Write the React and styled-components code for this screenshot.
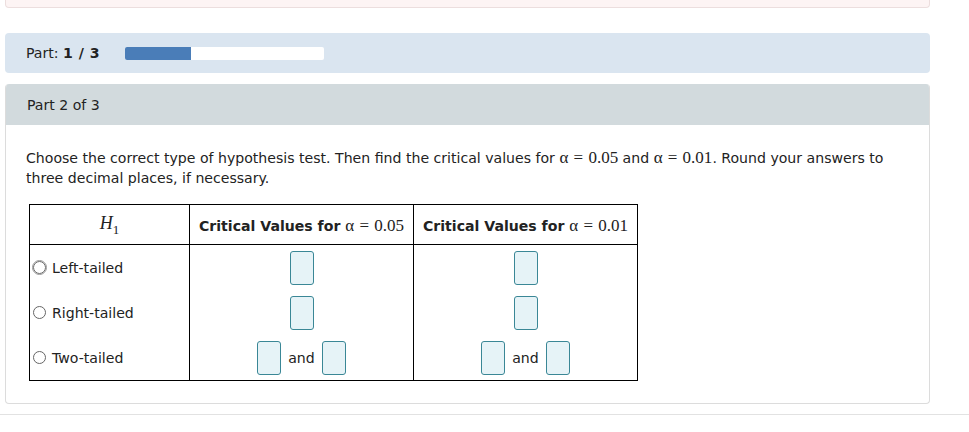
import React from 'react';
import styled, { createGlobalStyle } from 'styled-components';

const GlobalStyle = createGlobalStyle`
  html, body {
    margin: 0;
    padding: 0;
    background: #ffffff;
  }
  body {
    font-family: 'DejaVu Sans', Verdana, sans-serif;
    font-size: 14.1px;
    color: #222222;
  }
`;

const Page = styled.div`
  width: 969px;
  height: 432px;
  overflow: hidden;
  display: flex;
  flex-direction: column;
`;

const Content = styled.div`
  width: 925px;
  margin-left: 5px;
  display: flex;
  flex-direction: column;
`;

const AlertBox = styled.div`
  height: 7px;
  background: #fdf4f4;
  border: 1px solid #ecdede;
  border-top: none;
  border-radius: 0 0 4px 4px;
`;

const PartBar = styled.div`
  margin-top: 25px;
  height: 40px;
  background: #dae5f0;
  border-radius: 4px;
  display: flex;
  align-items: center;
  padding-left: 21px;
  gap: 25px;
`;

const PartLabel = styled.div`
  color: #222;
  b {
    font-weight: bold;
    word-spacing: 1px;
  }
`;

const Progress = styled.div`
  width: 199px;
  height: 13px;
  background: #ffffff;
  border-radius: 2px;
  overflow: hidden;
`;

const ProgressFill = styled.div`
  height: 100%;
  background: #4a7db8;
`;

const Section = styled.div`
  margin-top: 11px;
  border-radius: 4px;
  border: 1px solid #dcdcdc;
  border-top: none;
  overflow: hidden;
`;

const SectionHeader = styled.div`
  height: 41px;
  background: #d2dadd;
  display: flex;
  align-items: center;
  padding-left: 21px;
`;

const SectionBody = styled.div`
  padding: 23px 20px 23px 20px;
  height: 232px;
`;

const Prompt = styled.p`
  margin: 0;
  line-height: 20px;
  color: #222;
`;

const M = styled.span`
  font-family: 'Liberation Serif', 'Times New Roman', serif;
  font-size: 17px;
  font-weight: normal;
  white-space: nowrap;
  word-spacing: 1px;
`;

const Table = styled.table`
  margin-top: 16px;
  margin-left: 3px;
  border-collapse: collapse;
  td, th {
    border: 1px solid #000;
    padding: 0;
  }
`;

const HeadCell = styled.th`
  width: ${p => p.$w}px;
  height: 37px;
  padding-top: 2px !important;
  font-weight: bold;
  text-align: center;
  white-space: nowrap;
`;

const H1 = styled.span`
  font-family: 'Liberation Serif', 'Times New Roman', serif;
  font-style: italic;
  font-weight: normal;
  font-size: 18px;
  sub {
    font-style: normal;
    font-size: 13px;
    vertical-align: -5px;
  }
`;

const ChoiceCell = styled.td`
  vertical-align: top;
`;

const Choice = styled.label`
  display: flex;
  align-items: center;
  gap: 6px;
  height: 45px;
  padding-left: 3px;
`;

const Radio = styled.span`
  width: 13px;
  height: 13px;
  border-radius: 50%;
  border: 1px solid #666;
  box-sizing: border-box;
  background: #fff;
  outline: ${p => (p.$focus ? '1px solid #999' : 'none')};
  outline-offset: 0px;
`;

const AnswerCell = styled.td`
  vertical-align: top;
`;

const AnswerRow = styled.div`
  display: flex;
  align-items: center;
  justify-content: center;
  gap: 7px;
  height: 45px;
`;

const Blank = styled.span`
  display: inline-block;
  width: 22px;
  height: 32px;
  border: 1px solid #3a8796;
  border-radius: 3px;
  background: #e6f3f7;
`;

const BottomRule = styled.div`
  margin-top: 10px;
  height: 1px;
  background: #e2e2e2;
`;

const Answers = () => (
  <>
    <AnswerRow><Blank /></AnswerRow>
    <AnswerRow><Blank /></AnswerRow>
    <AnswerRow><Blank />and<Blank /></AnswerRow>
  </>
);

const App = () => {
  const choices = ['Left-tailed', 'Right-tailed', 'Two-tailed'];
  const progress = 1 / 3;

  return (
    <Page>
      <GlobalStyle />
      <Content>
        <AlertBox />
        <PartBar>
          <PartLabel>Part: <b>1 / 3</b></PartLabel>
          <Progress>
            <ProgressFill style={{ width: `${progress * 100}%` }} />
          </Progress>
        </PartBar>
        <Section>
          <SectionHeader>Part 2 of 3</SectionHeader>
          <SectionBody>
            <Prompt>
              Choose the correct type of hypothesis test. Then find the critical values for <M>α = 0.05</M> and <M>α = 0.01</M>. Round your answers to three decimal places, if necessary.
            </Prompt>
            <Table>
              <thead>
                <tr>
                  <HeadCell $w={159}><H1>H<sub>1</sub></H1></HeadCell>
                  <HeadCell $w={223}>Critical Values for <M>α = 0.05</M></HeadCell>
                  <HeadCell $w={223}>Critical Values for <M>α = 0.01</M></HeadCell>
                </tr>
              </thead>
              <tbody>
                <tr>
                  <ChoiceCell>
                    {choices.map((c, i) => (
                      <Choice key={c}><Radio $focus={i === 0} />{c}</Choice>
                    ))}
                  </ChoiceCell>
                  <AnswerCell><Answers /></AnswerCell>
                  <AnswerCell><Answers /></AnswerCell>
                </tr>
              </tbody>
            </Table>
          </SectionBody>
        </Section>
      </Content>
      <BottomRule />
    </Page>
  );
};

export default App;
